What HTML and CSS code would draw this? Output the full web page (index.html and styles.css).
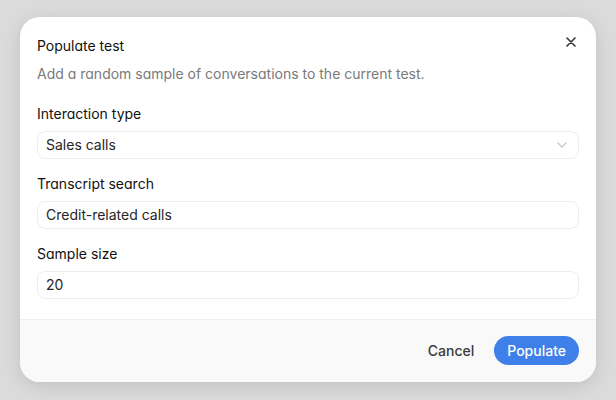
FILE: index.html
```html
<!DOCTYPE html>
<html lang="en">
<head>
    <meta charset="UTF-8">
    <meta name="viewport" content="width=device-width, initial-scale=1.0">
    <title>Populate test</title>
    <link rel="stylesheet" href="styles.css">
</head>
<body>
    <div class="dialog">
        <div class="dialogBody">
            <button class="closeBtn" aria-label="Close">
                <svg width="10" height="10" viewBox="0 0 10 10">
                    <path d="M1 1L9 9M9 1L1 9" stroke="#333" stroke-width="1.6" stroke-linecap="round"/>
                </svg>
            </button>
            <h2 class="title">Populate test</h2>
            <p class="desc">Add a random sample of conversations to the current test.</p>

            <div class="field">
                <label>Interaction type</label>
                <div class="input select">
                    <span>Sales calls</span>
                    <svg width="10" height="6" viewBox="0 0 10 6">
                        <path d="M1 1L5 5L9 1" fill="none" stroke="#c9c9c9" stroke-width="1.3" stroke-linecap="round" stroke-linejoin="round"/>
                    </svg>
                </div>
            </div>

            <div class="field">
                <label>Transcript search</label>
                <div class="input">Credit-related calls</div>
            </div>

            <div class="field">
                <label>Sample size</label>
                <div class="input">20</div>
            </div>
        </div>

        <div class="dialogFooter">
            <button class="cancelBtn">Cancel</button>
            <button class="primaryBtn">Populate</button>
        </div>
    </div>
</body>
</html>
```

FILE: styles.css
```css
body {
    margin: 0;
    height: 400px;
    background: #dbdbdb;
    font-family: Inter, "Noto Sans", sans-serif;
    color: #222;
    padding: 17px 20px 0;
    box-sizing: border-box;
}

.dialog {
    width: 576px;
    height: 365px;
    background: #fff;
    border-radius: 20px;
    box-shadow: 0 4px 18px rgba(0, 0, 0, 0.12);
    overflow: hidden;
    display: flex;
    flex-direction: column;
}

.dialogBody {
    position: relative;
    flex: 1;
    padding: 19px 17px 0;
}

.closeBtn {
    position: absolute;
    top: 14px;
    right: 14px;
    width: 22px;
    height: 22px;
    border: none;
    background: none;
    padding: 0;
    display: flex;
    align-items: center;
    justify-content: center;
    cursor: pointer;
}

.title {
    margin: 0;
    font-size: 14px;
    line-height: 20px;
    font-weight: 400;
    font-feature-settings: "cv11";
    color: #111;
}

.desc {
    margin: 8px 0 0;
    font-size: 14px;
    line-height: 20px;
    color: #7a7a7a;
    font-feature-settings: "cv11";
}

.field {
    margin-top: 20px;
    display: flex;
    flex-direction: column;
    gap: 7px;
}

.field + .field {
    margin-top: 15px;
}

.field label {
    font-size: 14px;
    line-height: 20px;
    font-weight: 400;
    font-feature-settings: "cv11";
    color: #111;
}

.input {
    height: 28px;
    box-sizing: border-box;
    border: 1px solid #ededed;
    border-radius: 8px;
    padding: 0 8px;
    font-size: 14px;
    line-height: 26px;
    color: #262626;
}

.select {
    display: flex;
    align-items: center;
    justify-content: space-between;
    padding-right: 11px;
}

.dialogFooter {
    height: 63px;
    box-sizing: border-box;
    background: #f9f9f9;
    border-top: 1px solid #efefef;
    display: flex;
    align-items: center;
    justify-content: flex-end;
    gap: 12px;
    padding: 0 17px 1px;
}

.cancelBtn {
    border: none;
    background: none;
    font-family: inherit;
    font-size: 14px;
    font-weight: 500;
    color: #3a3a3a;
    padding: 0 8px;
    height: 29px;
    cursor: pointer;
}

.primaryBtn {
    border: none;
    background: #3f7fe9;
    color: #fff;
    font-family: inherit;
    font-size: 14px;
    font-weight: 500;
    height: 29px;
    padding: 0 13px;
    border-radius: 15px;
    cursor: pointer;
}
```
